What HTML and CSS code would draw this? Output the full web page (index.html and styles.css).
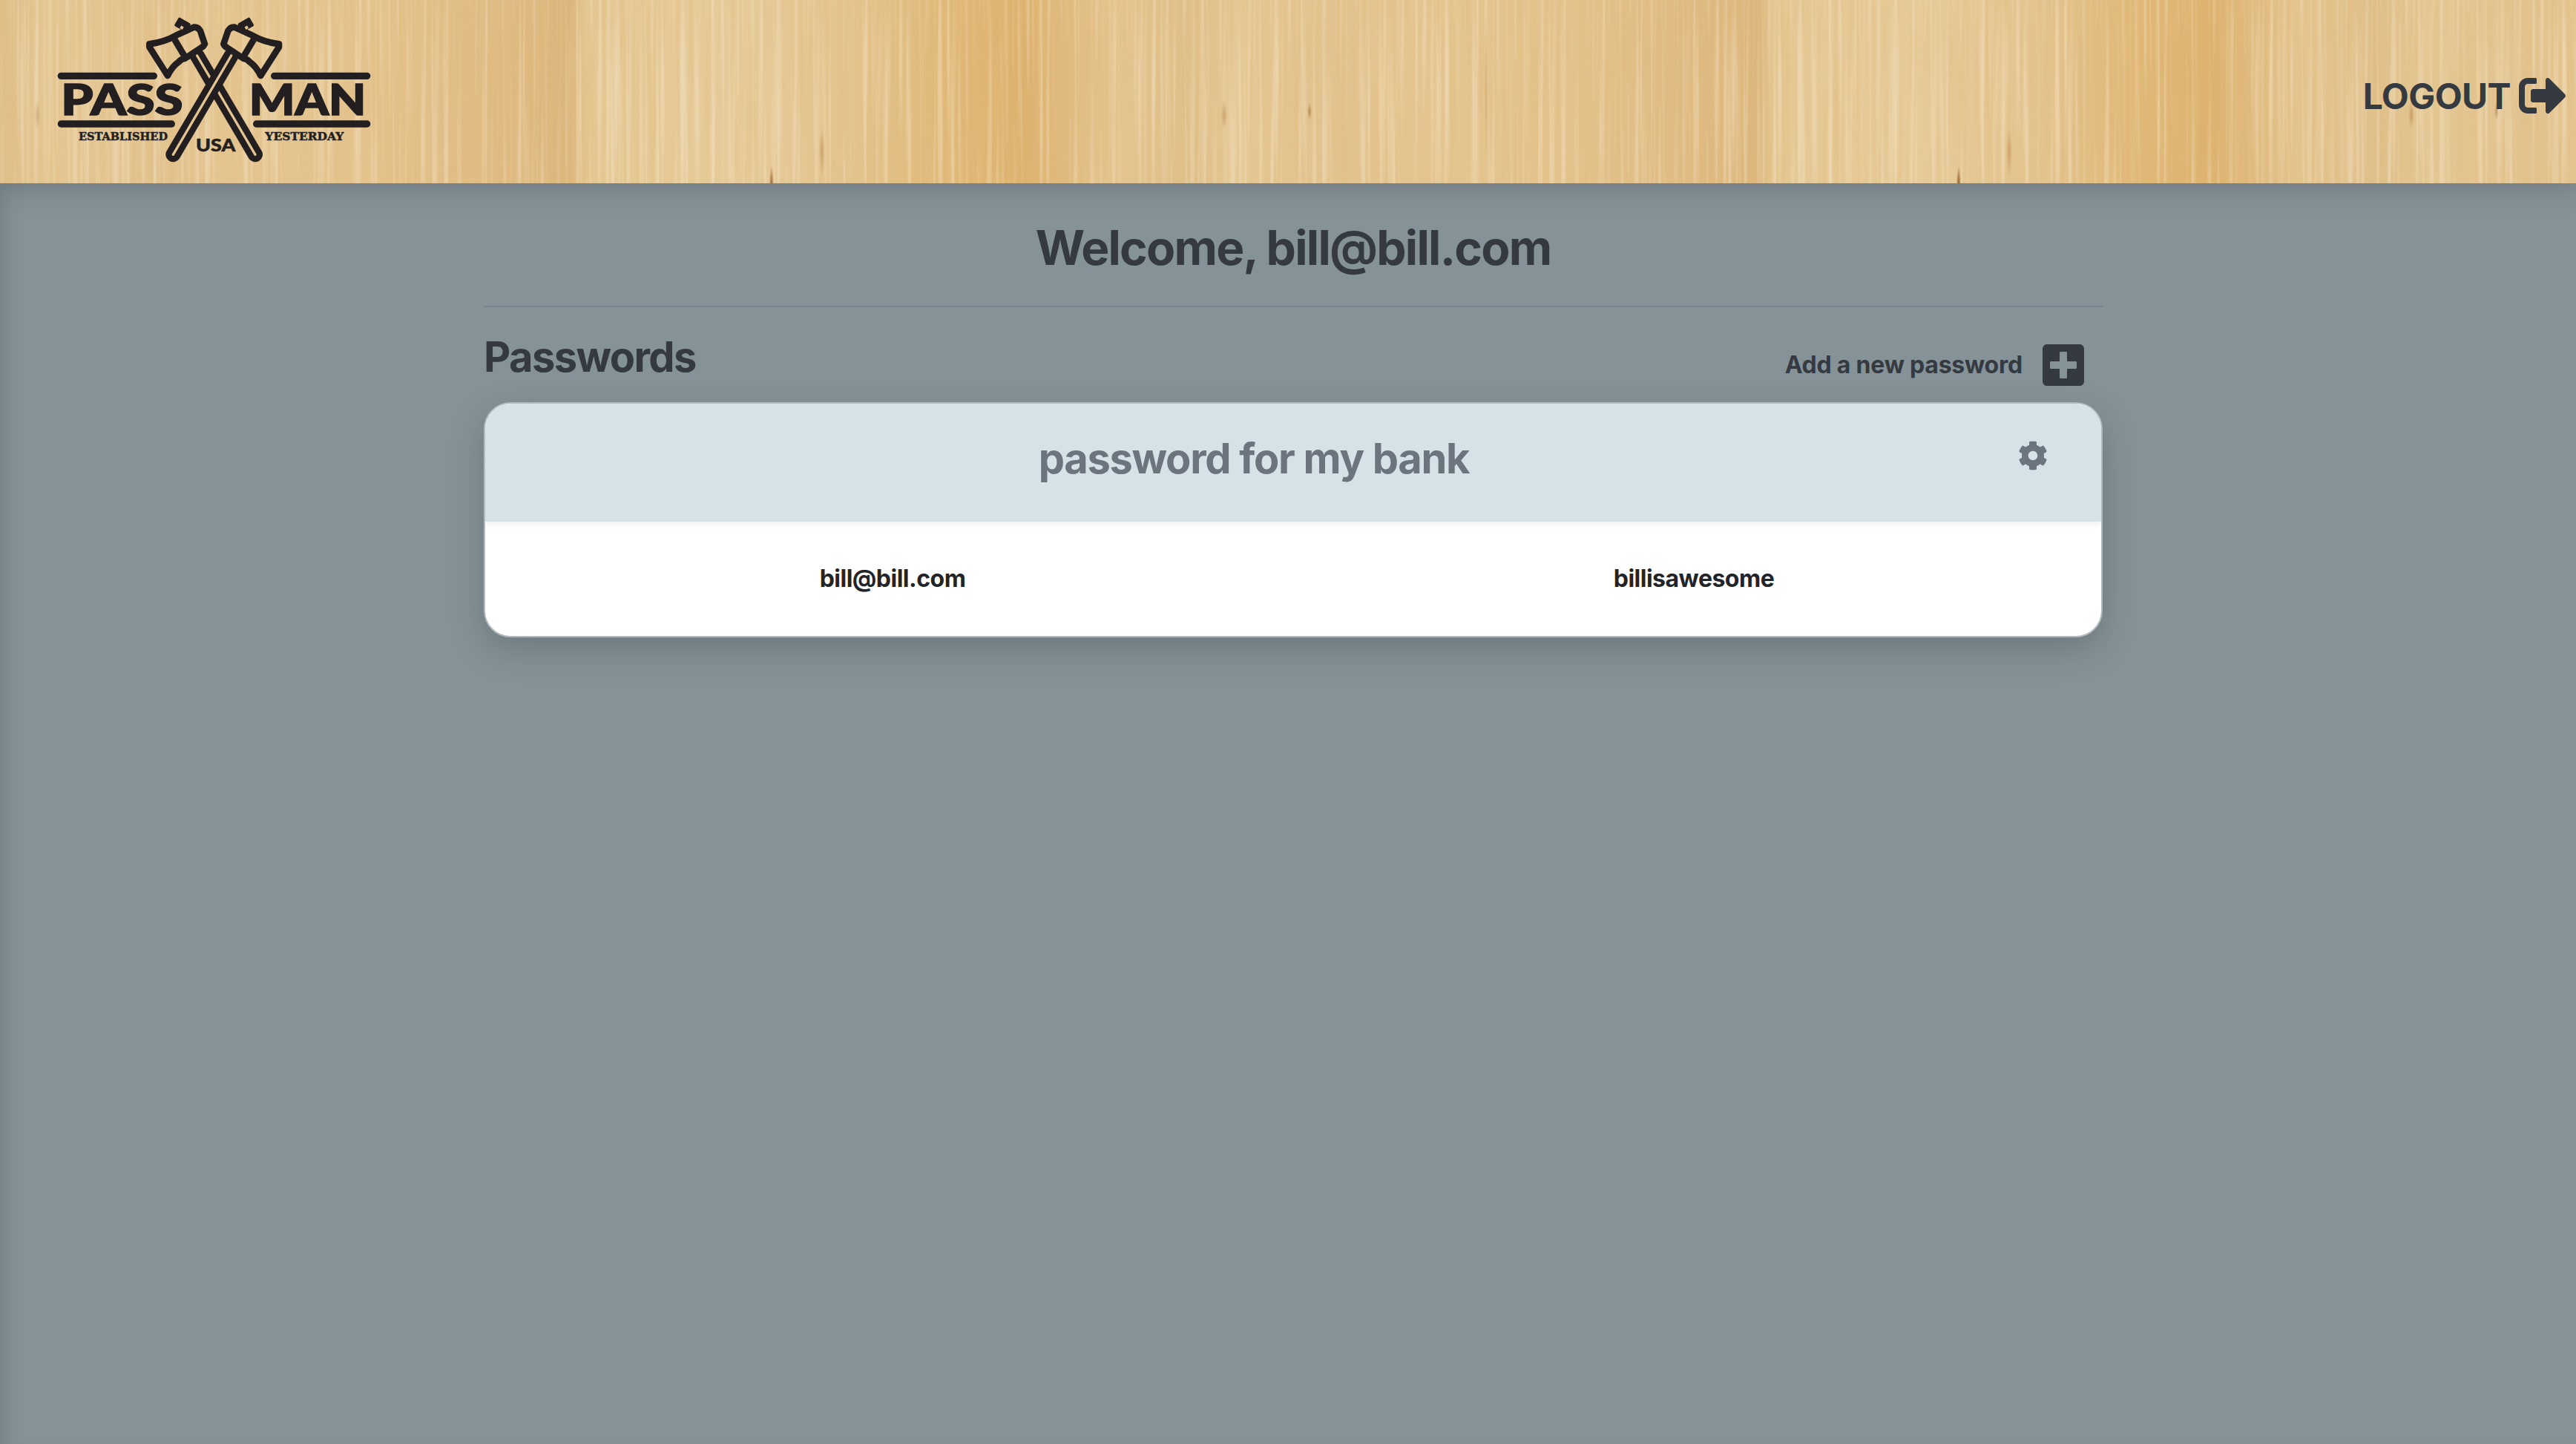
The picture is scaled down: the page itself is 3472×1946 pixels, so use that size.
FILE: index.html
```html
<!DOCTYPE html>
<html lang="en">
<head>
    <meta charset="UTF-8">
    <meta name="viewport" content="width=device-width, initial-scale=1.0">
    <title>Pass Man</title>
    <link rel="stylesheet" href="styles.css">
</head>
<body>

    <header class="topbar">
        <!-- grain lies over the wood gradient, behind the logo -->
        <svg class="wood-grain" aria-hidden="true">
            <filter id="grainDark" x="0" y="0" width="100%" height="100%">
                <feTurbulence type="fractalNoise" baseFrequency="0.11 0.0035" numOctaves="3" seed="7"/>
                <feColorMatrix values="0 0 0 0 0.76  0 0 0 0 0.50  0 0 0 0 0.20  2.6 0 0 0 -1.15"/>
            </filter>
            <filter id="grainLight" x="0" y="0" width="100%" height="100%">
                <feTurbulence type="fractalNoise" baseFrequency="0.17 0.003" numOctaves="2" seed="23"/>
                <feColorMatrix values="0 0 0 0 0.96  0 0 0 0 0.87  0 0 0 0 0.70  3 0 0 0 -1.45"/>
            </filter>
            <rect class="grain-rect" filter="url(#grainDark)"/>
            <rect class="grain-rect" filter="url(#grainLight)"/>
        </svg>

        <a class="logo" href="#">
            <svg class="logo-art" viewBox="0 0 1500 750" aria-label="Pass Man logo">
                <defs>
                    <g id="axeHead">
                        <path class="axe-line" d="M484 178 Q545 170 592 143 L664 110 Q680 108 690 125 L708 178 Q705 186 695 192 L627 237 Q612 238 603 250 Q575 270 558 306 L484 190 Z"/>
                        <path class="axe-line" d="M586 160 L628 230"/>
                        <rect class="axe-fill" x="590" y="80" width="56" height="40" rx="6" transform="rotate(30 618 100)"/>
                        <rect class="axe-hole" x="609" y="106" width="12" height="12" transform="rotate(30 615 112)"/>
                    </g>
                </defs>
                <use href="#axeHead"/>
                <use href="#axeHead" transform="translate(1492 0) scale(-1 1)"/>

                <line class="handle" x1="677" y1="225" x2="912" y2="625"/>
                <line class="handle-gap" x1="677" y1="225" x2="912" y2="625"/>
                <line class="handle" x1="815" y1="225" x2="580" y2="625"/>
                <line class="handle-gap" x1="815" y1="225" x2="580" y2="625"/>

                <rect class="axe-fill" x="113" y="293" width="403" height="28" rx="14"/>
                <rect class="axe-fill" x="975" y="293" width="403" height="28" rx="14"/>
                <rect class="axe-fill" x="113" y="487" width="475" height="28" rx="14"/>
                <rect class="axe-fill" x="903" y="487" width="475" height="28" rx="14"/>

                <text class="logo-big" x="127" y="466" textLength="493" lengthAdjust="spacingAndGlyphs">PASS</text>
                <text class="logo-big" x="887" y="466" textLength="473" lengthAdjust="spacingAndGlyphs">MAN</text>
                <text class="logo-small" x="198" y="566" textLength="360" lengthAdjust="spacingAndGlyphs">ESTABLISHED</text>
                <text class="logo-small" x="952" y="568" textLength="318" lengthAdjust="spacingAndGlyphs">YESTERDAY</text>
                <text class="logo-usa" x="672" y="611" textLength="160" lengthAdjust="spacingAndGlyphs">USA</text>
            </svg>
        </a>

        <a class="logout" href="#">
            <span class="logout-text">LOGOUT</span>
            <svg class="logout-icon" viewBox="0 0 512 512">
                <path d="M497 273L329 441c-15 15-41 4.5-41-17v-96H152c-13.3 0-24-10.7-24-24v-96c0-13.3 10.7-24 24-24h136V88c0-21.4 25.9-32 41-17l168 168c9.3 9.4 9.3 24.6 0 34zM192 436v-40c0-6.6-5.4-12-12-12H96c-17.7 0-32-14.3-32-32V160c0-17.7 14.3-32 32-32h84c6.6 0 12-5.4 12-12V76c0-6.6-5.4-12-12-12H96c-53 0-96 43-96 96v192c0 53 43 96 96 96h84c6.6 0 12-5.4 12-12z"/>
            </svg>
        </a>
    </header>

    <main class="content">
        <h1 class="welcome">Welcome, bill@bill.com</h1>

        <div class="section-head">
            <h2 class="section-title">Passwords</h2>
            <a class="add-link" href="#">
                <span>Add a new password</span>
                <svg class="add-icon" viewBox="0 32 448 448">
                    <path d="M400 32H48C21.5 32 0 53.5 0 80v352c0 26.5 21.5 48 48 48h352c26.5 0 48-21.5 48-48V80c0-26.5-21.5-48-48-48zm-32 252c0 6.6-5.4 12-12 12h-92v92c0 6.6-5.4 12-12 12h-56c-6.6 0-12-5.4-12-12v-92H92c-6.6 0-12-5.4-12-12v-56c0-6.6 5.4-12 12-12h92v-92c0-6.6 5.4-12 12-12h56c6.6 0 12 5.4 12 12v92h92c6.6 0 12 5.4 12 12v56z"/>
                </svg>
            </a>
        </div>

        <section class="card">
            <div class="card-head">
                <h3 class="card-title">password for my bank</h3>
                <svg class="cog-icon" viewBox="0 0 512 512">
                    <path d="M487.4 315.7l-42.6-24.6c4.3-23.2 4.3-47 0-70.2l42.6-24.6c4.9-2.8 7.1-8.6 5.5-14-11.1-35.6-30-67.8-54.7-94.6-3.8-4.1-10-5.1-14.8-2.3L380.8 110c-17.9-15.4-38.5-27.3-60.8-35.1V25.8c0-5.6-3.9-10.5-9.4-11.7-36.7-8.2-74.3-7.8-109.2 0-5.5 1.2-9.4 6.1-9.4 11.7V75c-22.2 7.9-42.8 19.8-60.8 35.1L88.7 85.5c-4.9-2.8-11-1.9-14.8 2.3-24.7 26.7-43.6 58.9-54.7 94.6-1.7 5.4.6 11.2 5.5 14L67.3 221c-4.3 23.2-4.3 47 0 70.2l-42.6 24.6c-4.9 2.8-7.1 8.6-5.5 14 11.1 35.6 30 67.8 54.7 94.6 3.8 4.1 10 5.1 14.8 2.3l42.6-24.6c17.9 15.4 38.5 27.3 60.8 35.1v49.2c0 5.6 3.9 10.5 9.4 11.7 36.7 8.2 74.3 7.8 109.2 0 5.5-1.2 9.4-6.1 9.4-11.7v-49.2c22.2-7.9 42.8-19.8 60.8-35.1l42.6 24.6c4.9 2.8 11 1.9 14.8-2.3 24.7-26.7 43.6-58.9 54.7-94.6 1.5-5.5-.7-11.3-5.6-14.1zM256 336c-44.1 0-80-35.9-80-80s35.9-80 80-80 80 35.9 80 80-35.9 80-80 80z"/>
                </svg>
            </div>
            <div class="card-body">
                <div class="card-cell">bill@bill.com</div>
                <div class="card-cell">billisawesome</div>
            </div>
        </section>
    </main>

</body>
</html>
```

FILE: styles.css
```css
* {
    box-sizing: border-box;
}

html, body {
    height: 100%;
}

body {
    margin: 0;
    font-family: Inter, "Liberation Sans", sans-serif;
    font-weight: 700;
    color: #343a40;
    background-color: #859298;
    box-shadow: inset 28px 0 30px -24px rgba(0, 0, 0, 0.14);
}

a {
    color: inherit;
    text-decoration: none;
}

/* wood strip, the tile repeats every 1600px */
.topbar {
    position: relative;
    display: flex;
    justify-content: space-between;
    align-items: center;
    height: 247px;
    padding-left: 40px;
    padding-right: 13px;
    box-shadow: 0 6px 36px rgba(0, 0, 0, 0.18);
    background-color: #e3c592;
    background-image:
        radial-gradient(3px 24px at 1040px 247px, #87531f, transparent),
        radial-gradient(4px 20px at 50px 155px, rgba(170, 110, 50, 0.5), transparent),
        radial-gradient(3px 12px at 165px 150px, rgba(150, 95, 40, 0.6), transparent),
        radial-gradient(4px 34px at 1108px 205px, rgba(170, 110, 50, 0.45), transparent),
        radial-gradient(2px 110px at 403px 110px, rgba(190, 125, 55, 0.35), transparent),
        linear-gradient(90deg,
            #dfbf8a 0, #e4c794 70px, #e2c28e 210px, #e4c591 300px, #e3c28c 520px,
            #dfba82 680px, #dcb67c 770px, #e4c793 790px, #e6ca99 1000px, #e3c38e 1150px,
            #e0b877 1280px, #ddb26f 1380px, #e0bb80 1440px, #e4c48f 1500px, #dfbf8a 1600px);
    background-size: 1600px 247px;
    background-repeat: repeat-x;
}

.wood-grain {
    position: absolute;
    top: 0;
    left: 0;
    width: 100%;
    height: 100%;
    opacity: 0.36;
}

.grain-rect {
    width: 100%;
    height: 100%;
}

.logo {
    position: relative;
    display: block;
}

.logo-art {
    display: block;
    width: 500px;
    height: 250px;
    margin-top: 3px;
}

.axe-line {
    fill: none;
    stroke: #231f20;
    stroke-width: 26;
    stroke-linejoin: round;
}

.axe-fill {
    fill: #231f20;
}

.axe-hole {
    fill: #e3c592;
}

.handle {
    stroke: #231f20;
    stroke-width: 60;
    stroke-linecap: round;
}

.handle-gap {
    stroke: #e3c592;
    stroke-width: 10;
    stroke-linecap: round;
}

.logo-big {
    fill: #231f20;
    stroke: #231f20;
    stroke-width: 5;
    font-family: Lato, "Liberation Sans", sans-serif;
    font-weight: 900;
    font-size: 174px;
}

.logo-small {
    fill: #231f20;
    stroke: #231f20;
    stroke-width: 1.5;
    font-family: "DejaVu Serif", "Liberation Serif", serif;
    font-weight: 700;
    font-size: 47px;
}

.logo-usa {
    fill: #231f20;
    stroke: #231f20;
    stroke-width: 1.5;
    font-family: Lato, "Liberation Sans", sans-serif;
    font-weight: 900;
    font-size: 70px;
}

.logout {
    position: relative;
    display: flex;
    align-items: center;
    gap: 11px;
    padding-top: 11px;
    font-size: 48px;
    line-height: 1;
    letter-spacing: -0.6px;
}

.logout-text {
    padding-top: 2px;
}

.logout-icon {
    width: 64px;
    height: 64px;
    fill: #343a40;
}

.content {
    width: 2182px;
    margin-left: 652px;
}

.welcome {
    margin: 0;
    padding: 48px 0 40px;
    font-size: 64px;
    line-height: 77px;
    letter-spacing: -1.75px;
    text-align: center;
    border-bottom: 2px solid #78848b;
}

.section-head {
    display: flex;
    justify-content: space-between;
    align-items: flex-start;
    height: 128px;
    padding: 36px 25px 0 0;
}

.section-title {
    margin: 0;
    font-size: 56px;
    line-height: 62px;
    letter-spacing: -1.6px;
}

.add-link {
    display: flex;
    align-items: center;
    gap: 27px;
    margin-top: 14px;
    font-size: 32px;
    line-height: 52px;
    letter-spacing: -0.22px;
}

.add-icon {
    width: 56px;
    height: 56px;
    fill: #343a40;
}

.card {
    overflow: hidden;
    border: 2px solid #b0babf;
    border-radius: 36px;
    background: #fff;
    box-shadow: 0 16px 48px rgba(0, 0, 0, 0.175);
}

.card-head {
    position: relative;
    display: flex;
    align-items: flex-start;
    height: 159px;
    padding: 40px 72px 0 6px;
    background: #d7e2e8;
    box-shadow: 0 4px 8px rgba(0, 0, 0, 0.06);
}

.card-title {
    flex: 1;
    margin: 0;
    font-size: 56px;
    line-height: 68px;
    letter-spacing: -1.3px;
    color: #6c757d;
    text-align: center;
}

.cog-icon {
    width: 40px;
    height: 40px;
    margin-top: 10px;
    fill: #6c757d;
}

.card-body {
    display: grid;
    grid-template-columns: 1fr 1fr;
    padding: 0 9px;
}

.card-cell {
    height: 154px;
    line-height: 153px;
    font-size: 32px;
    letter-spacing: -0.5px;
    color: #212529;
    text-align: center;
}
```
